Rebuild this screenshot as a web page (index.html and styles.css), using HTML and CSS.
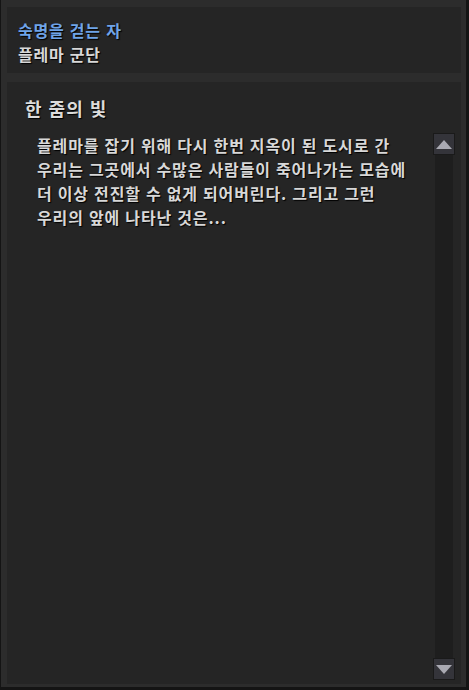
FILE: index.html
```html
<!DOCTYPE html>
<html lang="ko">
<head>
    <meta charset="UTF-8">
    <title>한 줌의 빛</title>
    <link rel="stylesheet" href="styles.css">
</head>
<body>
    <div class="quest-window">
        <div class="quest-header">
            <div class="quest-group">숙명을 걷는 자</div>
            <div class="quest-faction">플레마 군단</div>
        </div>
        <div class="quest-body">
            <h2 class="quest-title">한 줌의 빛</h2>
            <div class="quest-scroll">
                <p class="quest-text">플레마를 잡기 위해 다시 한번 지옥이 된 도시로 간<br>우리는 그곳에서 수많은 사람들이 죽어나가는 모습에<br>더 이상 전진할 수 없게 되어버린다. 그리고 그런<br>우리의 앞에 나타난 것은...</p>
                <div class="scrollbar">
                    <div class="scroll-btn up"><span class="arrow-up"></span></div>
                    <div class="scroll-track"></div>
                    <div class="scroll-btn down"><span class="arrow-down"></span></div>
                </div>
            </div>
        </div>
    </div>
</body>
</html>
```

FILE: styles.css
```css
body {
    margin: 0;
    background: #111;
    font-family: "Noto Sans CJK KR", sans-serif;
}

.quest-window {
    box-sizing: border-box;
    width: 469px;
    height: 690px;
    display: flex;
    flex-direction: column;
    padding: 7px 5px 3px 6px;
    background: #2c2c2c;
    border-left: 1px solid #141414;
    border-right: 3px solid #141414;
    border-bottom: 3px solid #141414;
    text-shadow: 1px 1px 1px #000;
}

.quest-header {
    height: 66px;
    box-sizing: border-box;
    padding: 11px 11px 0;
    margin-bottom: 9px;
    background: #252525;
    font-size: 16px;
    font-weight: bold;
    letter-spacing: 0.8px;
    line-height: 24px;
}

.quest-group {
    color: #6fa4e8;
}

.quest-faction {
    color: #d8d8d8;
}

.quest-body {
    flex: 1;
    display: flex;
    flex-direction: column;
    padding: 0 6px 4px 18px;
    background: #252525;
}

.quest-title {
    margin: 0;
    height: 51px;
    padding-top: 14px;
    box-sizing: border-box;
    font-size: 18px;
    font-weight: bold;
    letter-spacing: 1px;
    line-height: 24px;
    color: #dcdcdc;
}

.quest-scroll {
    flex: 1;
    display: flex;
}

.quest-text {
    flex: 1;
    margin: 0;
    padding: 0 0 0 12px;
    font-size: 16px;
    font-weight: bold;
    line-height: 24px;
    letter-spacing: 0.9px;
    word-spacing: -0.3px;
    color: #d8d8d8;
}

.scrollbar {
    width: 22px;
    display: flex;
    flex-direction: column;
}

.scroll-track {
    flex: 1;
    margin: 0 2px;
    background: #1e1e1e;
}

.scroll-btn {
    height: 22px;
    box-sizing: border-box;
    display: flex;
    align-items: center;
    justify-content: center;
    background: #34343a;
    border: 1px solid #1a1a1a;
}

.arrow-up {
    width: 0;
    height: 0;
    border-left: 8px solid transparent;
    border-right: 8px solid transparent;
    border-bottom: 9px solid #a9a9b2;
}

.arrow-down {
    width: 0;
    height: 0;
    border-left: 8px solid transparent;
    border-right: 8px solid transparent;
    border-top: 9px solid #a9a9b2;
}
```
